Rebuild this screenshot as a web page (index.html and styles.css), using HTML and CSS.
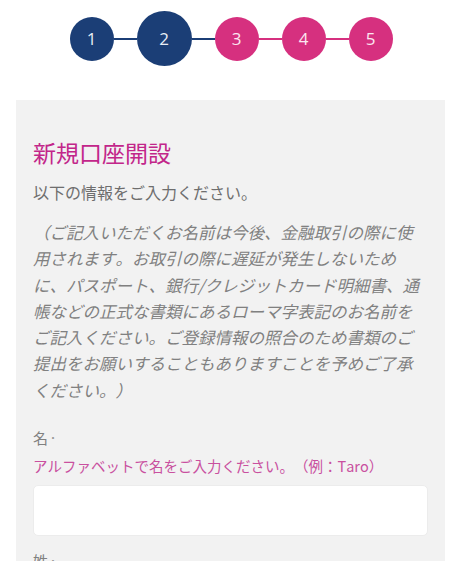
FILE: index.html
```html
<!DOCTYPE html>
<html>
<head>
    <title>新規口座開設</title>
    <link rel="stylesheet" href="styles.css">
</head>

<body>
    <div class="steps">
        <div class="step done">1</div>
        <div class="bar done"></div>
        <div class="step done current">2</div>
        <div class="bar done"></div>
        <div class="step">3</div>
        <div class="bar"></div>
        <div class="step">4</div>
        <div class="bar"></div>
        <div class="step">5</div>
    </div>

    <div class="panel">
        <h1 class="title">新規口座開設</h1>
        <p class="lead">以下の情報をご入力ください。</p>
        <p class="note">（ご記入いただくお名前は今後、金融取引の際に使用されます。お取引の際に遅延が発生しないために、パスポート、銀行/クレジットカード明細書、通帳などの正式な書類にあるローマ字表記のお名前をご記入ください。ご登録情報の照合のため書類のご提出をお願いすることもありますことを予めご了承ください。）</p>

        <div class="field">
            <label class="label" for="first-name">名<span class="req">・</span></label>
            <div class="hint">アルファベットで名をご入力ください。（例：Taro）</div>
            <input type="text" id="first-name" class="input">
        </div>

        <div class="field">
            <label class="label" for="last-name">姓<span class="req">・</span></label>
            <input type="text" id="last-name" class="input">
        </div>
    </div>
</body>
</html>
```

FILE: styles.css
```css
* {
    margin: 0;
    padding: 0;
    box-sizing: border-box;
}

body {
    background: #fff;
    font-family: "Noto Sans CJK JP", sans-serif;
    font-kerning: none;
    text-spacing-trim: space-all;
    padding-top: 11px;
}

.steps {
    display: flex;
    align-items: center;
    justify-content: center;
    height: 55px;
    padding-left: 1px;
}
.step {
    width: 44px;
    height: 44px;
    border-radius: 50%;
    background: #d6307f;
    color: #fbe6f0;
    display: flex;
    align-items: center;
    justify-content: center;
    font-family: "Open Sans", sans-serif;
    font-size: 17px;
}
.step.done {
    background: #1b3e76;
    color: #e8edf5;
}
.step.current {
    width: 55px;
    height: 55px;
}
.bar {
    width: 23px;
    height: 2px;
    background: #d6307f;
}
.bar.done {
    background: #1b3e76;
}

.panel {
    margin: 34px 16px 0 16px;
    background: #f2f2f2;
    padding: 36px 17px 40px 17px;
}

.title {
    font-size: 23px;
    font-weight: normal;
    line-height: 32px;
    color: #c2268a;
}
.lead {
    margin-top: 11px;
    font-size: 16px;
    line-height: 26px;
    color: #6e6e6e;
}
.note {
    margin-top: 14px;
    font-size: 16.5px;
    line-height: 26.3px;
    font-style: italic;
    color: #808080;
}

.field {
    margin-top: 24px;
}
.field + .field {
    margin-top: 14px;
}
.label {
    display: block;
    font-size: 15px;
    line-height: 22px;
    color: #808080;
}
.req {
    font-size: 10px;
    vertical-align: top;
    color: #999;
}
.hint {
    margin-top: 6px;
    font-size: 14.5px;
    line-height: 22px;
    color: #c9509f;
}
.input {
    display: block;
    width: 100%;
    height: 51px;
    margin-top: 8px;
    border: 1px solid #ececec;
    border-radius: 5px;
    background: #fff;
    font-size: 16px;
    padding: 0 12px;
}
```
